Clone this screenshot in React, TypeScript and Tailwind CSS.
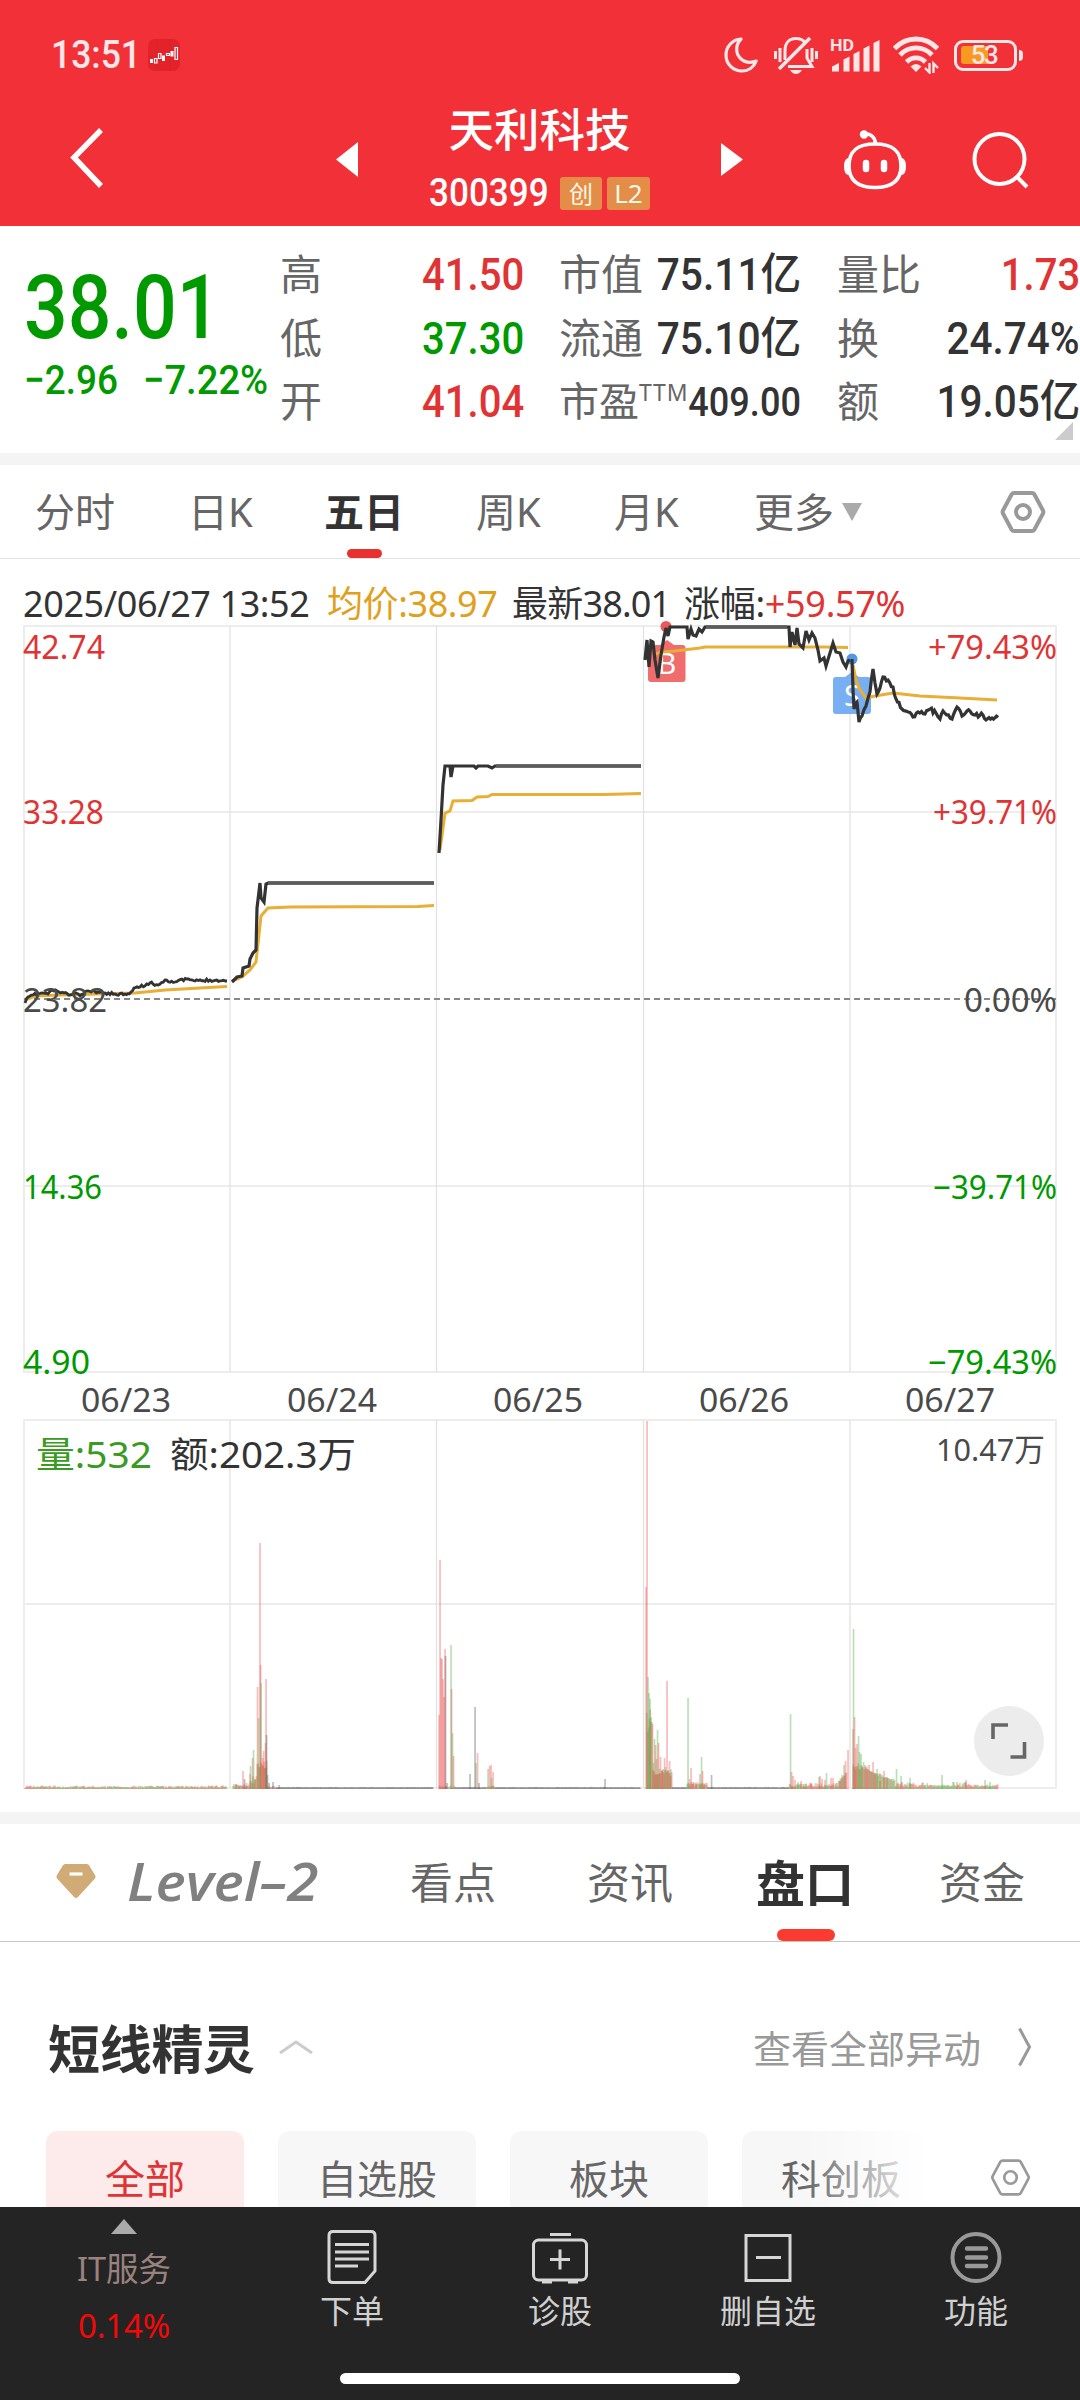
import type { ReactNode } from 'react';
import clsx from 'clsx';

type Pt = [number, number];

const RED = '#e03434';
const GREEN = '#009a00';

/* ---------- shared bits ---------- */

// Condensed figures used by the quote header
function Num({ children, className }: { children: ReactNode; className?: string }) {
  return (
    <span className={clsx("inline-block whitespace-nowrap font-['Roboto','Noto_Sans_CJK_SC',sans-serif] font-medium", className)}>
      {children}
    </span>
  );
}

function HexIcon({ className, thick }: { className: string; thick: number }) {
  return (
    <svg viewBox="0 0 46 46" className={className} fill="none" stroke="#999" strokeWidth={thick} strokeLinejoin="round">
      <path d="M14 4h18q1.500 0 2.300 1.300L43 21.500q.8 1.500 0 3L34.300 40.700Q33.500 42 32 42H14q-1.500 0-2.300-1.300L3 24.500q-.8-1.500 0-3L11.700 5.300Q12.500 4 14 4z" />
      <circle cx="23" cy="23" r="7" />
    </svg>
  );
}

/* ---------- status bar + title ---------- */

function StatusBar() {
  return (
    <div className="flex h-[110px] items-center pl-[51px] text-[#ffe6e7]">
      <Num className="w-[97px] origin-left scale-x-[0.91] text-[39px] leading-[110px]">13:51</Num>
      <svg viewBox="0 0 32 32" className="size-8" fill="none">
        <rect width="32" height="32" rx="7" fill="#e3222a" />
        <path d="M8.500 0v32M0 17h32M22 0v32" stroke="#c92a2e" strokeWidth=".6" />
        <path d="M3.500 20v4M15.500 16.500v5.500M24 12v5.500" stroke="#fff" strokeWidth="3" />
        <path d="M6.500 19.500h2.500v4.500H6.500zM10.500 14.500h2.500v5h-2.500zM18.500 14.500h3v2h-3zM27 8.500h2.500v12H27z" stroke="#fff" strokeWidth="1.200" />
      </svg>
      <svg viewBox="0 0 34 36" className="ml-[544px] h-9 w-[34px]" fill="none" stroke="currentColor" strokeWidth="3.200" strokeLinejoin="round">
        <path d="M17 2C8.500 2.500 2 9.500 2 18c0 9 7 16 16 16 6.500 0 12-4 14.200-10-2.500 1.200-4.600 1.300-6.200 1.300-7.500 0-13.300-5.800-13.300-13C12.700 8 14.500 4.500 17 2z" />
      </svg>
      <svg viewBox="0 0 44 40" className="ml-4 h-10 w-11" fill="none" stroke="currentColor" strokeWidth="3">
        <path d="M1.500 16v8M6 13v14M42.500 16v8M38 13v14" />
        <path d="M11 25V16C11 8 15 3.500 22 3.500c4 0 7 1.300 9 4M33 14v9l5 8.500H14" />
        <path d="M5 34 36 3" strokeWidth="3.600" />
        <path d="M16 35h12q-2.500 4-6 4t-6-4z" fill="currentColor" stroke="none" />
      </svg>
      <svg viewBox="0 0 50 36" className="ml-3 h-9 w-[50px]" fill="currentColor">
        <text x="0" y="14" fontSize="17" fontWeight="700" fontFamily="Roboto" textLength="24" lengthAdjust="spacingAndGlyphs">HD</text>
        <path d="M2 29.500 9 26v8.500H2zM13.500 22.500l6-3v15h-6zM23.500 17l6-3v20.500h-6zM33.500 11.500l6-3v26h-6zM43.500 6l6-3v31.500h-6z" />
      </svg>
      <svg viewBox="0 0 46 38" className="ml-[13px] h-[38px] w-[46px]" fill="none" stroke="currentColor" strokeWidth="4.800">
        <path d="M1.500 12.500C13.500-.2 32.500-.2 44.500 12.500M7 19c9-9.500 23-9.500 32 0M13.500 26c5.500-5.500 13.500-5.500 19 0" />
        <path d="m23 36-5.500-5.500q5.500-5 11 0z" fill="currentColor" stroke="none" />
        <path d="M36.500 27v9.500L32 32M40.500 37v-9.500l4.500 4.500" strokeWidth="2.400" />
      </svg>
      <div className="relative ml-[15px] h-[31px] w-[63px] rounded-[9px] border-[3px] border-current p-[3.500px]">
        <div className="h-full w-[27px] rounded-l-[3px] bg-[#f79a1f]" />
        <span className="absolute inset-0 pr-[3px] text-center font-['Roboto'] text-[26px] leading-[25px] font-medium tracking-[-1.500px]">53</span>
        <span className="absolute top-[7px] -right-[9px] h-[11px] w-[4px] rounded-r-sm bg-current" />
      </div>
    </div>
  );
}

function TitleBar() {
  return (
    <div className="flex h-[116px] text-white">
      <svg viewBox="0 0 34 62" className="mt-[17px] ml-[70px] h-[62px] w-[34px]" fill="none" stroke="#fff" strokeWidth="5.500">
        <path d="M31 3 4 30.500 31 59" />
      </svg>
      <svg viewBox="0 0 22 35" className="mt-[32px] ml-[232px] h-[35px] w-[22px]" fill="#fff">
        <path d="M22 0v35L0 17.500z" />
      </svg>
      <div className="ml-[61px] w-[241px]">
        <div className="h-[42px] text-center text-[45.500px] leading-[39px] font-medium whitespace-nowrap">天利科技</div>
        <div className="mt-[24px] flex h-[34px] items-center pl-[10px]">
          <Num className="w-[131px] origin-left scale-x-[0.9] text-[39px] leading-[34px]">300399</Num>
          <span className="h-[33px] w-[42px] rounded-[3px] bg-[#e48d48] text-center text-[24px] leading-[33px] text-[#fff8e6]">创</span>
          <span className="ml-[5px] h-[33px] w-[43px] rounded-[3px] bg-[#e48d48] text-center text-[26px] leading-[33px] text-[#fff8e6]">L2</span>
        </div>
      </div>
      <svg viewBox="0 0 22 33" className="mt-[33px] ml-[61px] h-[33px] w-[22px]" fill="#fff">
        <path d="M0 0v33l22-16.500z" />
      </svg>
      <svg viewBox="0 0 64 62" className="mt-[19px] ml-[100px] h-[62px] w-16" fill="none" stroke="#fff" strokeWidth="3.600">
        <path d="M32 15C14 15 6 22 6 37s9 21.500 26 21.500S58 52 58 37 50 15 32 15z" />
        <path d="M21 5.500c6-1.500 11 2 11.500 9" />
        <circle cx="21" cy="5.500" r="4.200" fill="#fff" stroke="none" />
        <path d="M6 29q-5 0-5 8.500T6 46zM58 29q5 0 5 8.500T58 46z" fill="#fff" stroke="none" />
        <path d="M23 34v6M41 34v6" strokeWidth="6.500" strokeLinecap="round" />
      </svg>
      <svg viewBox="0 0 58 58" className="mt-[21px] ml-[64px] size-[58px]" fill="none" stroke="#fff" strokeWidth="4">
        <circle cx="28.500" cy="28" r="25" />
        <path d="m45 45 11 11" />
      </svg>
    </div>
  );
}

/* ---------- quote ---------- */

function Stat({ label, value, tone = 'text-[#333]' }: { label: ReactNode; value: string; tone?: string }) {
  return (
    <div className="flex h-[63.500px] justify-between text-[42px] leading-[62px] whitespace-nowrap text-[#666]">
      <span>{label}</span>
      <span className="flex w-0 justify-end">
        <Num className={clsx('mt-px origin-right scale-x-[0.91] text-[44px]', tone)}>{value}</Num>
      </span>
    </div>
  );
}

function Quote() {
  return (
    <div className="flex h-[227px] pt-[17px]">
      <div className="w-[280px] pl-[24px] text-[#009a00]">
        <Num className="mt-[25px] block h-[80px] origin-left scale-x-[0.865] text-[89px] leading-[80px]">38.01</Num>
        <div className="mt-[5px] flex h-[54px]">
          <Num className="w-[119px] origin-left scale-x-[0.9] text-[41px] leading-[54px]">−2.96</Num>
          <Num className="origin-left scale-x-[0.93] text-[41px] leading-[54px]">−7.22%</Num>
        </div>
      </div>
      <div className="w-[244px]">
        <Stat label="高" value="41.50" tone="text-[#e03434]" />
        <Stat label="低" value="37.30" tone="text-[#009a00]" />
        <Stat label="开" value="41.04" tone="text-[#e03434]" />
      </div>
      <div className="ml-[35px] w-[242px]">
        <Stat label="市值" value="75.11亿" tone="!scale-x-[0.925] text-[#333]" />
        <Stat label="流通" value="75.10亿" tone="!scale-x-[0.925] text-[#333]" />
        <Stat
          label={
            <span className="flex text-[40px]">
              市盈<span className="text-[23px] leading-[45px] tracking-[0.8px]">TTM</span>
            </span>
          }
          value="409.00"
          tone="!scale-x-[0.88] !text-[41px] text-[#333]"
        />
      </div>
      <div className="relative ml-[36px] w-[243px]">
        <Stat label="量比" value="1.73" tone="text-[#e03434]" />
        <Stat label="换" value="24.74%" tone="!scale-x-[0.92] text-[#333]" />
        <Stat label="额" value="19.05亿" tone="!scale-x-[0.92] text-[#333]" />
        <svg viewBox="0 0 18 18" className="absolute right-[7px] bottom-[13px] size-[18px]" fill="#ccc">
          <path d="M18 0v18H0z" />
        </svg>
      </div>
    </div>
  );
}

function PeriodTabs() {
  return (
    <div className="flex h-[94px] items-center border-b border-[#e4e4e4] pl-[35px] text-[40px] leading-[93px] whitespace-nowrap text-[#666]">
      <span className="w-[153px]">分时</span>
      <span className="w-[136px]">日K</span>
      <span className="relative w-[152px] font-bold text-[#333]">
        五日
        <i className="absolute bottom-0 left-[23px] h-[9px] w-[35px] rounded-full bg-[#e83030]" />
      </span>
      <span className="w-[138px]">周K</span>
      <span className="w-[140px]">月K</span>
      <span>更多</span>
      <svg viewBox="0 0 20 18" className="ml-[8px] h-[18px] w-5" fill="#aaa">
        <path d="M0 0h20L10 18z" />
      </svg>
      <HexIcon className="ml-[138px] size-[46px]" thick={4} />
    </div>
  );
}

/* ---------- charts ---------- */

// Deterministic jitter so that the intraday lines keep the same shape
const rand = (seed: number) => {
  let s = seed;
  return () => {
    s = (s * 16807) % 2147483647;
    return s / 2147483647;
  };
};

const line = (pts: Pt[]) => pts.map(([x, y], i) => `${i ? 'L' : 'M'}${x} ${y}`).join('');

const noisy = (pts: Pt[], amp: number, seed: number) => {
  const r = rand(seed);
  const out: Pt[] = [pts[0]];
  for (let i = 1; i < pts.length; i++) {
    const [x0, y0] = pts[i - 1];
    const [x1, y1] = pts[i];
    const n = Math.max(1, Math.round((x1 - x0) / 1.7));
    for (let k = 1; k < n; k++) {
      out.push([x0 + ((x1 - x0) * k) / n, y0 + ((y1 - y0) * k) / n + (r() - 0.5) * 2 * amp]);
    }
    out.push([x1, y1]);
  }
  return line(out);
};

const price1: Pt[] = [[25, 1003], [28, 997], [33, 995], [42, 993], [48, 994], [52, 990], [64, 993], [70, 995], [76, 993], [80, 996], [88, 991], [98, 992], [105, 993], [115, 994], [125, 994], [131, 992], [134, 988], [140, 987], [150, 983], [158, 985], [165, 980], [175, 982], [187, 979], [195, 981], [210, 980], [227, 981]];
const price2: Pt[] = [[232, 982], [237, 977], [242, 976], [243, 968], [249, 966], [250, 959], [253, 953], [256, 950], [257, 908], [260, 883], [261, 898], [264, 902], [266, 884], [268, 883], [434, 883]];
const price3: Pt[] = [[439, 853], [441, 820], [443, 785], [445, 766], [450, 766], [451, 777], [453, 766], [474, 766], [476, 768], [478, 766], [488, 766], [492, 768], [495, 766], [641, 766]];
const price4: Pt[] = [[645, 660], [647, 640], [649, 667], [651, 641], [653, 642], [655, 660], [658, 678], [661, 655], [664, 637], [666, 628], [668, 636], [670, 627], [685, 627], [687, 627], [688, 639], [691, 629], [693, 635], [696, 636], [699, 629], [702, 632], [705, 627], [789, 627], [790, 647], [792, 632], [795, 645], [797, 628], [799, 644], [803, 648], [806, 631], [809, 640], [812, 633], [815, 638], [818, 650], [820, 661], [824, 658], [826, 666], [830, 653], [833, 643], [836, 652], [840, 653], [843, 662], [846, 667], [848, 661], [850, 660]];
const price5: Pt[] = [[852, 659], [853, 690], [854, 709], [857, 702], [859, 722], [862, 716], [866, 706], [870, 692], [873, 669], [877, 694], [880, 688], [883, 677], [888, 680], [893, 687], [896, 699], [902, 709], [908, 712], [913, 717], [918, 712], [925, 714], [930, 709], [936, 713], [940, 719], [943, 711], [952, 719], [957, 707], [962, 716], [967, 711], [975, 715], [983, 715], [986, 720], [992, 718], [998, 717.5]];

const avgs: Pt[][] = [
  [[25, 1000], [35, 996], [60, 995], [135, 993], [155, 991], [165, 990], [200, 988], [227, 986.5]],
  [[232, 981], [242, 977], [250, 970], [256, 962], [261, 916], [268, 908], [290, 907], [418, 906.5], [434, 905.5]],
  [[440, 850], [445, 813], [450, 811], [453, 801], [472, 800.5], [477, 797], [488, 796.5], [492, 794.5], [605, 794.5], [641, 793.5]],
  [[655, 654], [662, 652], [675, 651], [700, 648], [705, 647], [810, 647], [825, 647], [848, 647.5]],
  [[853, 665], [856, 680], [860, 690], [866, 698], [875, 696], [893, 693], [920, 696], [960, 698], [997, 700]],
];

const DAY_X = [230, 436.5, 643.5, 850];

const priceLabels = [
  { y: 658.5, left: '42.74', right: '+79.43%', fill: RED, lw: 82, rw: 129 },
  { y: 824, left: '33.28', right: '+39.71%', fill: RED, lw: 81, rw: 124 },
  { y: 1011.5, left: '23.82', right: '0.00%', fill: '#4a4a4a', lw: 84, rw: 93 },
  { y: 1198.5, left: '14.36', right: '−39.71%', fill: GREEN, lw: 79, rw: 124 },
  { y: 1374, left: '4.90', right: '−79.43%', fill: GREEN, lw: 67, rw: 129 },
];

function PriceChart() {
  return (
    <svg viewBox="0 620 1080 800" className="h-[800px] w-full" fill="none" fontFamily="'Noto Sans', 'Noto Sans CJK SC', sans-serif">
      <path d="M23 626H1057M23 812H1057M23 1186H1057M23 1372H1057" stroke="#ededed" strokeWidth="2" />
      <path d="M24 626V1372M1056 626V1372" stroke="#ececec" strokeWidth="2" />
      {DAY_X.map((x) => (
        <path key={x} d={`M${x} 626V1372`} stroke="#e2e2e2" strokeWidth="1.300" />
      ))}
      <path d="M24 999H1056" stroke="#888" strokeWidth="1.800" strokeDasharray="6 4" />

      <circle cx="666" cy="626.500" r="5.500" fill="#e9595b" />
      <path d="m667 640 7 5h8.500q3 0 3 3v31q0 3-3 3h-31.500q-3 0-3-3v-31q0-3 3-3h9z" fill="#f06d6e" />
      <text x="667" y="674" fontSize="29" fill="#fff" textAnchor="middle">B</text>
      <circle cx="852" cy="659" r="5.500" fill="#5397e6" />
      <path d="m852 672 7 5h9q3 0 3 3v31q0 3-3 3h-32q-3 0-3-3v-31q0-3 3-3h9z" fill="#78aef2" />
      <text x="852" y="706" fontSize="29" fill="#fff" textAnchor="middle">S</text>

      {avgs.map((a) => (
        <path key={a[0][0]} d={line(a)} stroke="#e8ae35" strokeWidth="3" />
      ))}
      <g stroke="#333" strokeWidth="3.200">
        <path d={noisy(price1, 1.3, 11)} strokeWidth="2.800" />
        <path d={line(price2)} />
        <path d={line(price3)} />
        <path d={line(price4)} />
        <path d={noisy(price5, 2, 77)} />
      </g>
      {/* limit-up stretches are drawn lighter */}
      <path d="M268 883H434M496 766H641M706 627H787" stroke="#5c5c5c" strokeWidth="3.400" />

      {priceLabels.map((l) => (
        <g key={l.y} fontSize="32.500" fill={l.fill}>
          <text x="23" y={l.y} textLength={l.lw} lengthAdjust="spacingAndGlyphs">{l.left}</text>
          <text x={1057 - l.rw} y={l.y} textLength={l.rw} lengthAdjust="spacingAndGlyphs">{l.right}</text>
        </g>
      ))}
      {['06/23', '06/24', '06/25', '06/26', '06/27'].map((d, i) => (
        <text key={d} x={81 + i * 206} y="1411.500" fontSize="33.500" fill="#4a4a4a" textLength="90" lengthAdjust="spacingAndGlyphs">{d}</text>
      ))}
    </svg>
  );
}

const R = '#ee4b4b';
const G = '#4cae43';
const K = '#555555';

// x, height, colour
const spikes: [number, number, string][] = [
  [236, 5, R], [239, 4, R], [243, 18, R], [244.5, 10, K], [246.5, 6, R], [250, 15, R], [250.5, 23, G], [252.5, 31, R], [253.5, 39, G],
  [255, 10, R], [257.500, 102, R], [258.500, 71, G], [260, 246, R], [260.500, 124, R], [261, 106, G], [262.500, 31, R], [263.500, 38, R], [264.500, 21, G],
  [265.500, 46, R], [266, 110, R], [266.500, 54, K], [267.500, 14, K], [269, 6, K], [273, 7, K], [279, 4, K],
  [439, 74, R], [440, 229, R], [441, 131, R], [442, 130, R], [443, 110, R], [444, 92, R], [445, 140, R], [445.500, 133, K], [447, 6, K],
  [451, 144, G], [451.500, 100, R], [452.500, 56, G], [453.500, 33, R], [470, 15, K], [475, 82, K], [476, 26, G], [477.500, 36, R], [479, 6, K],
  [488, 20, G], [489.500, 23, R], [491, 24, R], [491.500, 11, G], [493, 17, R], [605, 10, K],
  [646, 202, R], [647, 368, R], [648, 112, G], [649, 96, G], [650, 90, G], [650.500, 67, R], [652.500, 65, R], [653.500, 26, G], [654.500, 50, G],
  [655.500, 44, R], [656.500, 30, R], [657.500, 59, G], [658.500, 46, R], [659.500, 20, G], [660.500, 32, R], [662, 18, R], [663, 17, R], [664.500, 31, R],
  [665.500, 22, G], [667, 108, R], [668, 18, R], [669.500, 28, R], [670.500, 13, R], [688, 91, G], [689.500, 10, R], [691, 21, R], [693, 5, R], [696, 5, R],
  [700, 15, R], [701.500, 32, G], [702.500, 18, R], [704, 5, R], [711.500, 14, K],
  [790.500, 75, G], [791.500, 17, R], [793, 13, R], [795, 9, R], [798, 7, G], [801, 8, R], [804, 5, R], [806, 5, G], [811, 6, R], [819, 12, G], [820, 13, R],
  [822, 10, R], [825, 9, R], [826.500, 16, G], [831, 11, R], [833, 11, R], [837, 6, G], [840, 8, R], [842, 14, G], [844, 24, G], [845.500, 28, R], [848, 39, R],
  [853, 60, R], [853.500, 160, G], [854.500, 72, R], [855.500, 41, R], [857, 45, R], [858.500, 53, G], [859.500, 37, G], [861, 35, G], [862.500, 22, R],
  [865, 24, G], [867, 20, R], [869, 24, R], [871, 17, R], [873, 27, R], [875, 16, R], [877, 20, G], [880, 8, R], [884, 18, R], [887, 12, G], [896.500, 20, G],
  [901, 13, G], [910, 11, G], [942, 14, G], [957, 7, R], [966, 9, R], [985, 9, G], [990, 7, G],
];

const filler = () => {
  const r = rand(4242);
  const out: [number, number, string][] = [];
  for (let x = 25; x < 998; x += 0.86) {
    const edge = DAY_X.some((d) => Math.abs(d - x) < 3);
    if (edge) continue;
    // sealed limit-up periods trade almost nothing
    const quiet = (x > 276 && x < 436) || (x > 455 && x < 486) || (x > 494 && x < 643) || (x > 672 && x < 687) || (x > 707 && x < 789);
    if (quiet) {
      out.push([x, 1.5 + r() * 0.6, K]);
      continue;
    }
    let h = 1 + r() * 2.5;
    if (x > 225 && x < 250) h = 2 + r() * 3;
    if (x > 250 && x < 257) h = 5 + r() * 8;
    if (x > 257 && x < 267) h = 20 + r() * 12;
    if (x > 643 && x < 672) h = 14 + r() * 6;
    if (x > 644 && x < 652) h = 55 + r() * 30;
    if (x > 687 && x < 707) h = 3 + r() * 4;
    if (x > 789 && x < 840) h = 2 + r() * 4;
    if (x > 838 && x < 850) h = 6 + (x - 838) + r() * 3;
    if (x > 850) h = 20 * Math.exp(-(x - 865) / 26) + 1 + r() * 3.5;
    if (x > 850 && x < 865) h = 18 + r() * 9;
    if (x > 895) h = 2 + r() * 5 * (x < 930 || (x > 950 && x < 970) ? 1 : 0.5);
    out.push([x, h, r() > 0.5 ? R : G]);
  }
  return out;
};

const bars = [...filler(), ...spikes];

function VolumeChart() {
  return (
    <svg viewBox="0 1420 1080 372" className="h-[372px] w-full overflow-visible" fill="none" fontFamily="'Noto Sans', 'Noto Sans CJK SC', sans-serif">
      <path d="M23 1420H1057M23 1604H1057M23 1788H1057M24 1420V1788M1056 1420V1788" stroke="#ededed" strokeWidth="2" />
      {DAY_X.map((x) => (
        <path key={x} d={`M${x} 1420V1788`} stroke="#e2e2e2" strokeWidth="1.300" />
      ))}
      {bars.map(([x, h, c], i) => (
        <rect key={i} x={x - 0.8} y={1789 - h} width="1.700" height={h} fill={c} opacity="0.38" />
      ))}
      <g fontSize="36">
        <text x="36" y="1468" fill="#3a9a22" textLength="116" lengthAdjust="spacingAndGlyphs">量:532</text>
        <text x="170" y="1468" fill="#333" textLength="186" lengthAdjust="spacingAndGlyphs">额:202.3万</text>
      </g>
      <text x="936" y="1461" fontSize="31.500" fill="#4a4a4a" textLength="109" lengthAdjust="spacingAndGlyphs">10.47万</text>
      <circle cx="1009" cy="1741" r="35" fill="#ececec" />
      <path d="M993 1739v-14h15M1024.500 1742v15h-14" stroke="#666" strokeWidth="3.600" />
    </svg>
  );
}

function Charts() {
  return (
    <div className="h-[1253px]">
      <div className="flex h-[61px] pt-[23px] pl-[23px] text-[36px] leading-[44px] whitespace-nowrap text-[#333]">
        <span className="w-[304px] tracking-[-0.4px]">2025/06/27 13:52</span>
        <span className="w-[185px] tracking-[-0.4px] text-[#e0a01c]">均价:38.97</span>
        <span className="w-[172px] tracking-[-0.8px]">最新38.01</span>
        <span className="tracking-[-0.3px]">涨幅:<b className="font-normal text-[#e03434]">+59.57%</b></span>
      </div>
      <PriceChart />
      <VolumeChart />
    </div>
  );
}

/* ---------- lower section ---------- */

function SectionTabs() {
  return (
    <div className="flex h-[118px] items-center border-b border-[#c6c6c6] pl-[56px] text-[43px] leading-[116px] whitespace-nowrap text-[#666]">
      <svg viewBox="0 0 40 36" className="-mt-[3px] h-9 w-10">
        <path d="M9.500 1h21q1.500 0 2.500 1.200L39 12q1.200 2-.3 3.800L22 34q-2 2-4 0L1.300 15.800Q-.2 14 1 12L7 2.200Q8 1 9.500 1z" fill="#d0ab76" />
        <path d="M13.500 11h13" stroke="#fff" strokeWidth="3.200" />
      </svg>
      <span className="-mt-[4px] ml-[31px] w-[283px] origin-left scale-x-[1.1] font-['Open_Sans'] text-[52px] font-semibold text-[#808080] italic">
        Level–2
      </span>
      <span className="w-[177px]">看点</span>
      <span className="w-[169px]">资讯</span>
      <span className="relative w-[183px] text-[49px] font-bold text-[#333]">
        盘口
        <i className="absolute bottom-0 left-[21px] h-[12px] w-[58px] rounded-full bg-[#fb3b30]" />
      </span>
      <span>资金</span>
    </div>
  );
}

function Chip({ children, className = 'bg-[#f7f7f7] text-[#666]' }: { children: ReactNode; className?: string }) {
  return (
    <div className={clsx('h-[96px] w-[198px] shrink-0 rounded-[12px] text-center text-[40px] leading-[95px]', className)}>{children}</div>
  );
}

function ShortLine() {
  return (
    <div className="h-[265px] overflow-hidden whitespace-nowrap">
      <div className="flex h-[189px] items-center pt-[24px] pl-[48px]">
        <h2 className="text-[52px] leading-none font-bold tracking-[-0.3px] text-[#333]">短线精灵</h2>
        <svg viewBox="0 0 34 14" className="-mt-[3px] ml-[24px] h-[14px] w-[34px]" fill="none" stroke="#ccc" strokeWidth="3">
          <path d="M1 13 17 2l16 11" />
        </svg>
        <span className="ml-auto text-[38px] text-[#999]">查看全部异动</span>
        <svg viewBox="0 0 14 40" className="-mt-[3px] mr-[48px] ml-[37px] h-10 w-[14px]" fill="none" stroke="#999" strokeWidth="3">
          <path d="m1.500 1.500 10 18.500-10 18.500" />
        </svg>
      </div>
      <div className="flex items-center">
        <div className="relative flex w-[932px] gap-[34px] overflow-hidden pl-[46px]">
          <Chip className="bg-[#fdeaea] text-[#e03434]">全部</Chip>
          <Chip>自选股</Chip>
          <Chip>板块</Chip>
          <Chip>科创板</Chip>
          <div className="absolute inset-y-0 right-0 w-[130px] bg-linear-to-r from-white/0 to-white" />
        </div>
        <HexIcon className="-mt-[4px] ml-[58px] size-[41px]" thick={3} />
      </div>
    </div>
  );
}

function NavItem({ label, children }: { label: string; children: ReactNode }) {
  return (
    <div className="flex w-[208px] flex-col items-center text-[32px] leading-[44px] text-[#d0d0d0]">
      <svg viewBox="0 0 60 60" className="mt-[20px] size-[60px]" fill="none" stroke="#d6d6d6" strokeWidth="3">
        {children}
      </svg>
      <span className="mt-[2px]">{label}</span>
    </div>
  );
}

function BottomBar() {
  return (
    <div className="relative flex h-[193px] bg-[#242424]">
      <div className="flex w-[248px] flex-col items-center">
        <svg viewBox="0 0 26 15" className="mt-[12px] h-[15px] w-[26px]" fill="#aaa">
          <path d="M13 0 26 15H0z" />
        </svg>
        <span className="mt-[13px] text-[32.500px] leading-[44px] text-[#99827f]">IT服务</span>
        <span className="mt-[13px] text-[33px] leading-[44px] tracking-[-0.2px] text-[#f40808]">0.14%</span>
      </div>
      <NavItem label="下单">
        <path d="M11 4.500h38q4 0 4 4V44L43 55.500H11q-4 0-4-4v-43q0-4 4-4z" />
        <path d="M13 17.500h34M13 25h34M13 32h34M13 39h23" />
      </NavItem>
      <NavItem label="诊股">
        <rect x="3.500" y="13" width="53" height="40" rx="5" />
        <path d="M20 7.500h21M30 22.500v20M20 32.500h20M12 55h10M38 55h10" />
      </NavItem>
      <NavItem label="删自选">
        <path d="M8 8.500h44v45H8zM18 30.500h25" />
      </NavItem>
      <NavItem label="功能">
        <circle cx="30" cy="30.500" r="23.500" stroke="#999" strokeWidth="4" />
        <path d="M21 21.500h19M21 30.500h19M21 39h19" stroke="#999" strokeWidth="4.400" strokeLinecap="round" />
      </NavItem>
      <div className="absolute bottom-[16px] left-[340px] h-[11px] w-[400px] rounded-full bg-white" />
    </div>
  );
}

export default function App() {
  return (
    <div className="h-[2400px] w-[1080px] overflow-hidden bg-white font-['Noto_Sans','Noto_Sans_CJK_SC',sans-serif]">
      <header className="h-[226px] bg-[#f23038]">
        <StatusBar />
        <TitleBar />
      </header>
      <Quote />
      <div className="h-[12px] bg-[#f4f4f4]" />
      <PeriodTabs />
      <Charts />
      <div className="h-[12px] bg-[#f4f4f4]" />
      <SectionTabs />
      <ShortLine />
      <BottomBar />
    </div>
  );
}
